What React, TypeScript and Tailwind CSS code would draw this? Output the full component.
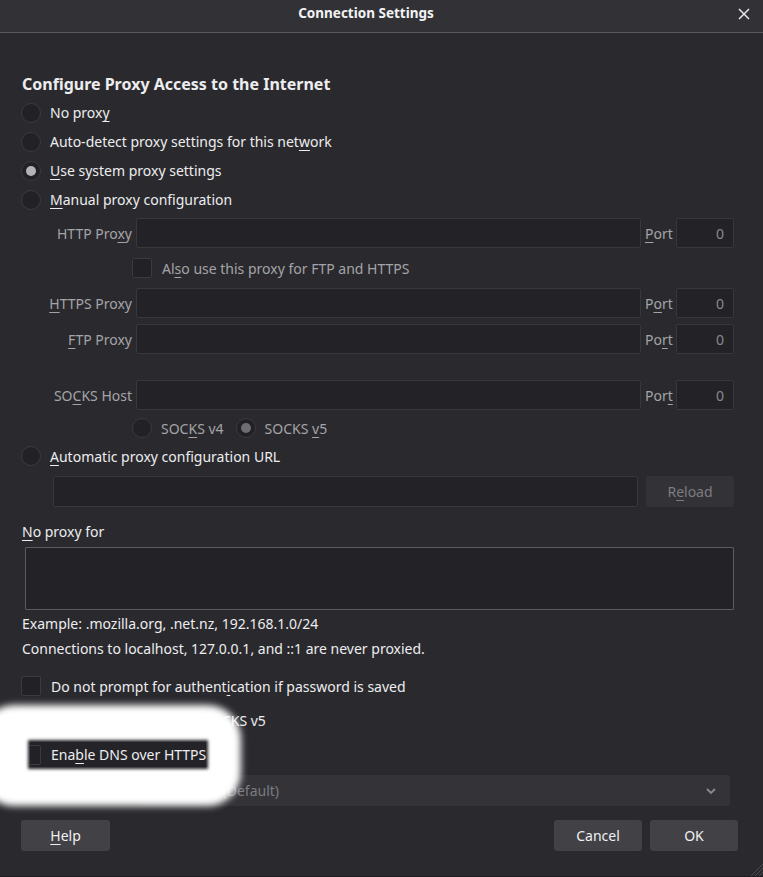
import type { ReactNode } from "react";

function K({ c }: { c: string }) {
  return <span className="underline decoration-1 underline-offset-[3px]">{c}</span>;
}

function Radio({ checked = false, dim = false }: { checked?: boolean; dim?: boolean }) {
  return (
    <span className="w-[20px] h-[20px] rounded-full bg-[#222226] border border-[#3b3b3f] flex items-center justify-center shrink-0">
      {checked && (
        <span className={`w-[10px] h-[10px] rounded-full ${dim ? "bg-[#6e6e72]" : "bg-[#b4b4b6]"}`} />
      )}
    </span>
  );
}

function Check() {
  return <span className="w-[20px] h-[20px] rounded-[2px] bg-[#222226] border border-[#3b3b3f] shrink-0" />;
}

function Field({ className = "" }: { className?: string }) {
  return <div className={`rounded-[2px] bg-[#232327] border border-[#38383c] ${className}`} />;
}

function ProxyRow({ label, port }: { label: ReactNode; port: ReactNode }) {
  return (
    <div className="flex items-center h-[30px] text-[#a4a4a8]">
      <div className="w-[111px] text-right">{label}</div>
      <Field className="ml-[4px] w-[505px] h-[30px]" />
      <div className="ml-[4px] w-[27px]">{port}</div>
      <div className="ml-[4px] w-[58px] h-[30px] rounded-[2px] bg-[#232327] border border-[#38383c] flex items-center justify-end pr-[9px] text-[#8a8a8e]">
        0
      </div>
    </div>
  );
}

export default function App() {
  return (
    <div
      className="relative w-[763px] h-[877px] bg-[#2a2a2e] text-[#ededef] text-[14px] overflow-hidden"
      style={{ fontFamily: '"Noto Sans", "Open Sans", sans-serif' }}
    >
      {/* Title bar */}
      <div className="relative h-[33px] bg-[#323236] border-b border-[#58585c] flex items-center justify-center pr-[31px]">
        <span className="font-bold text-[13.5px] text-[#f2f2f4] -mt-[5px]">Connection Settings</span>
        <svg className="absolute right-[13px] top-[8px]" width="12" height="12" viewBox="0 0 12 12">
          <path d="M1 1 L11 11 M11 1 L1 11" stroke="#e8e8ea" strokeWidth="1.5" fill="none" />
        </svg>
      </div>

      <div className="px-[21px] pt-[36px]">
        <div className="h-[29px] flex items-center font-bold text-[16px] pl-[1px]">
          Configure Proxy Access to the Internet
        </div>

        {[
          <>No prox<K c="y" /></>,
          <>Auto-detect proxy settings for this net<K c="w" />ork</>,
          <><K c="U" />se system proxy settings</>,
          <><K c="M" />anual proxy configuration</>,
        ].map((t, i) => (
          <div key={i} className="h-[29px] flex items-center gap-[9px]">
            <Radio checked={i === 2} />
            <span>{t}</span>
          </div>
        ))}

        {/* Manual proxy */}
        <div className="mt-[4px]">
          <ProxyRow label={<>HTTP Pro<K c="x" />y</>} port={<><K c="P" />ort</>} />
          <div className="h-[30px] mt-[5px] flex items-center pl-[111px] gap-[10px] text-[#a4a4a8]">
            <Check />
            <span>Al<K c="s" />o use this proxy for FTP and HTTPS</span>
          </div>
          <div className="mt-[5px]">
            <ProxyRow label={<><K c="H" />TTPS Proxy</>} port={<>P<K c="o" />rt</>} />
          </div>
          <div className="mt-[6px]">
            <ProxyRow label={<><K c="F" />TP Proxy</>} port={<>Po<K c="r" />t</>} />
          </div>
          <div className="mt-[26px]">
            <ProxyRow label={<>SO<K c="C" />KS Host</>} port={<>Por<K c="t" /></>} />
          </div>
          <div className="h-[28px] mt-[4px] flex items-center pl-[111px] text-[#a4a4a8]">
            <Radio />
            <span className="ml-[9px]">SOC<K c="K" />S v4</span>
            <span className="ml-[12px]">
              <Radio checked dim />
            </span>
            <span className="ml-[9px]">SOCKS <K c="v" />5</span>
          </div>
        </div>

        <div className="h-[28px] flex items-center gap-[9px]">
          <Radio />
          <span><K c="A" />utomatic proxy configuration URL</span>
        </div>
        <div className="mt-[6px] flex items-center">
          <Field className="ml-[32px] w-[585px] h-[31px]" />
          <div className="ml-[8px] w-[88px] h-[31px] rounded-[3px] bg-[#333337] flex items-center justify-center text-[#7c7c80]">
            R<K c="e" />load
          </div>
        </div>

        <div className="mt-[10px] h-[28px] flex items-center pl-[1px]">
          <span><K c="N" />o proxy for</span>
        </div>
        <div className="ml-[4px] w-[709px] h-[63px] mt-[2px] bg-[#232327] border border-[#5c5c60] rounded-[1px]" />

        <div className="h-[24px] mt-[1px] flex items-center pl-[1px]">
          Example: .mozilla.org, .net.nz, 192.168.1.0/24
        </div>
        <div className="h-[24px] mt-[1px] flex items-center pl-[1px]">
          Connections to localhost, 127.0.0.1, and ::1 are never proxied.
        </div>

        <div className="mt-[12px] h-[28px] flex items-center gap-[10px]">
          <Check />
          <span>Do not prompt for authent<K c="i" />cation if password is saved</span>
        </div>
        <div className="h-[28px] flex items-center gap-[10px] mt-[6px]">
          <Check />
          <span>Proxy <K c="D" />NS when using SOCKS v5</span>
        </div>

        {/* Enable DNS row (shows through the redaction) */}
        <div className="relative z-20 mt-[8px] ml-[9px] w-[176px] h-[25px] overflow-hidden bg-[#242428] shadow-[0_0_3px_2px_#242428]">
          <div className="-ml-[9px] h-full flex items-center gap-[10px]">
            <Check />
            <span className="whitespace-nowrap">Ena<K c="b" />le DNS over HTTPS</span>
          </div>
        </div>

        <div className="mt-[8px] flex items-center">
          <span className="ml-[30px] w-[90px]">Use Provider</span>
          <div className="w-[589px] h-[31px] rounded-[3px] bg-[#333338] flex items-center pl-[10px] pr-[14px] text-[#7c7c80]">
            <span className="flex-1">Cloudflare (Default)</span>
            <svg width="10" height="6" viewBox="0 0 10 6">
              <path d="M1 1 L5 5 L9 1" stroke="#8a8a8e" strokeWidth="1.8" fill="none" />
            </svg>
          </div>
        </div>

        <div className="mt-[14px] flex items-center">
          <div className="w-[89px] h-[31px] rounded-[3px] bg-[#424246] flex items-center justify-center text-[#f0f0f2]">
            <span><K c="H" />elp</span>
          </div>
          <div className="ml-auto w-[88px] h-[31px] rounded-[3px] bg-[#424246] flex items-center justify-center text-[#f0f0f2]">
            Cancel
          </div>
          <div className="ml-[8px] mr-[4px] w-[88px] h-[31px] rounded-[3px] bg-[#424246] flex items-center justify-center text-[#f0f0f2]">
            OK
          </div>
        </div>
      </div>

      {/* Redaction blob */}
      <div className="absolute z-10 left-[-20px] top-[705px] w-[261px] h-[101px] rounded-[34px] bg-white blur-[3.5px]" />

      {/* Resize grip */}
      <svg className="absolute right-0 bottom-[1px]" width="15" height="15" viewBox="0 0 15 15">
        <path d="M15 3 L3 15 M15 7 L7 15 M15 11 L11 15" stroke="#4a4a4e" strokeWidth="1" fill="none" />
      </svg>
      <div className="absolute left-0 right-0 bottom-0 h-[1px] bg-[#1e1e20]" />
    </div>
  );
}
